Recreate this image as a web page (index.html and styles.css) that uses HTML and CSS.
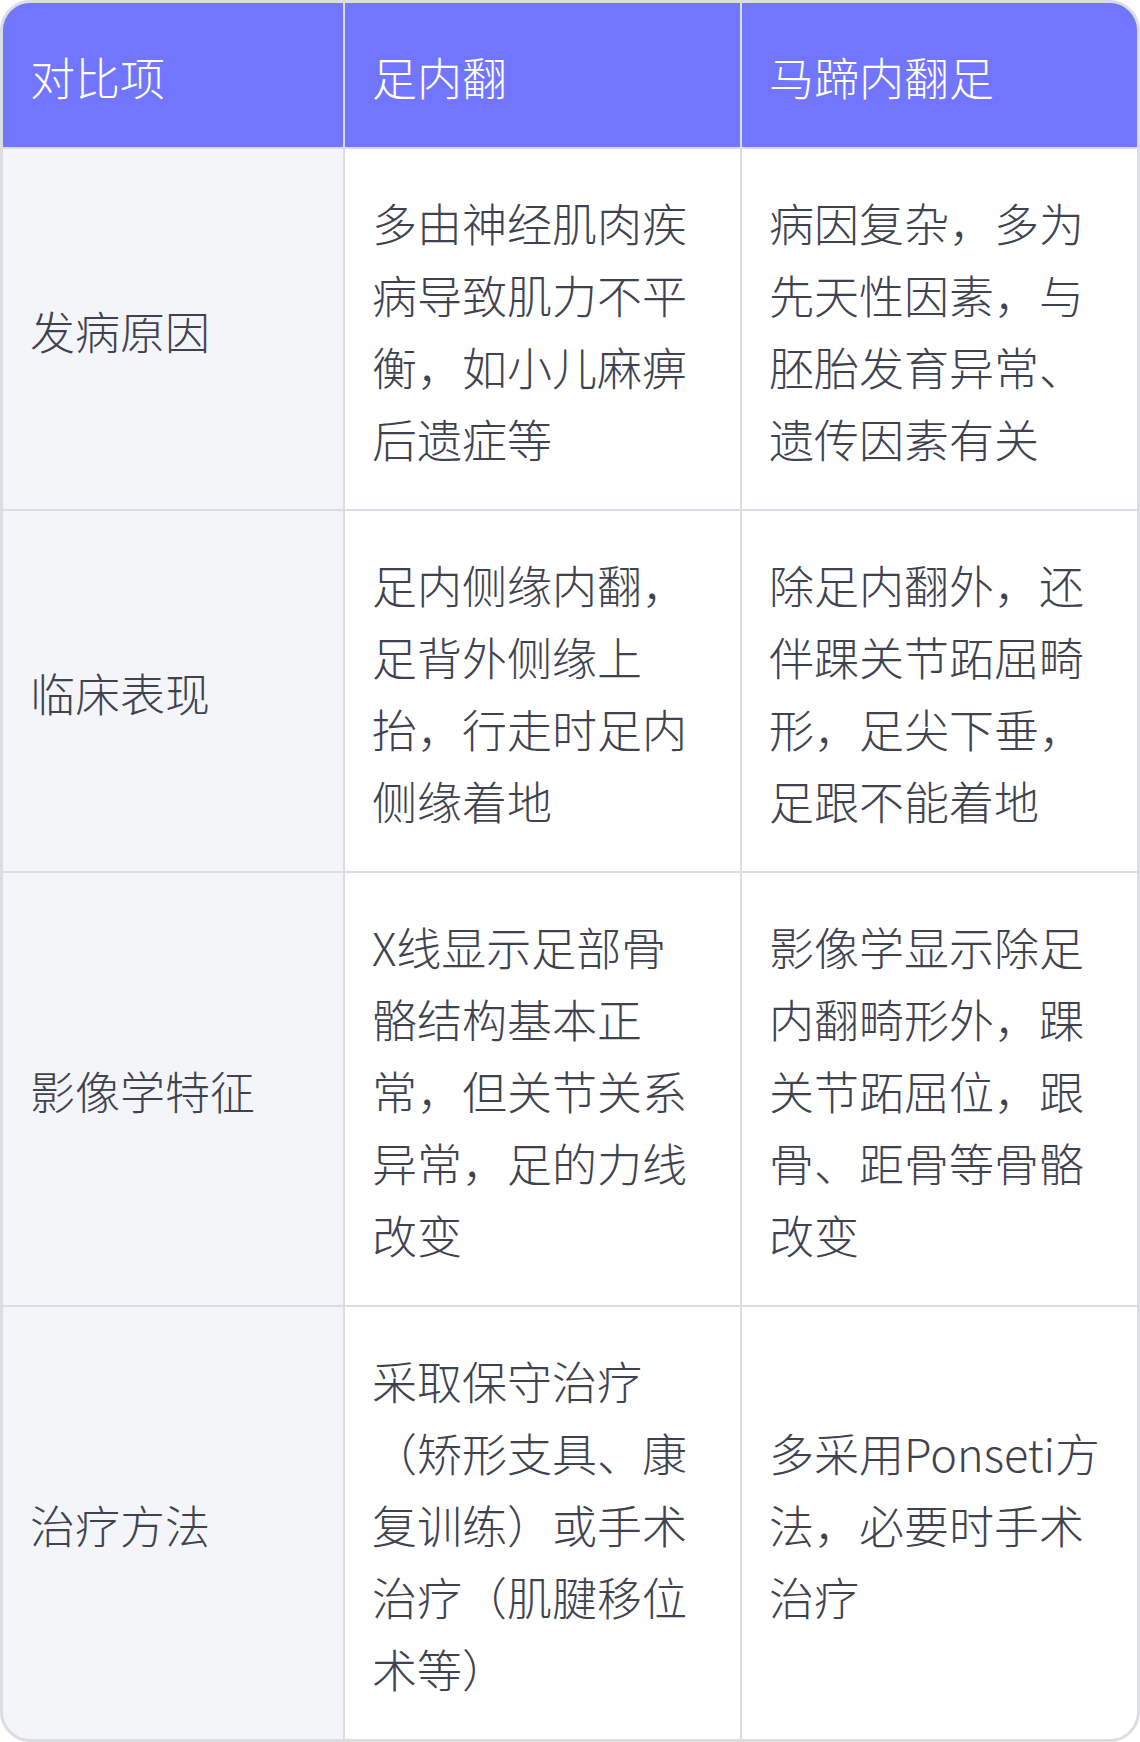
FILE: index.html
```html
<!DOCTYPE html>
<html lang="zh-CN">
<head>
<meta charset="utf-8">
<title>足内翻与马蹄内翻足对比</title>
<link rel="stylesheet" href="styles.css">
</head>
<body>
<div class="card">
  <table class="compare">
    <colgroup>
      <col class="c1">
      <col class="c2">
      <col class="c3">
    </colgroup>
    <thead>
      <tr>
        <th>对比项</th>
        <th>足内翻</th>
        <th>马蹄内翻足</th>
      </tr>
    </thead>
    <tbody>
      <tr>
        <td class="label">发病原因</td>
        <td>多由神经肌肉疾病导致肌力不平衡，如小儿麻痹后遗症等</td>
        <td>病因复杂，多为先天性因素，与胚胎发育异常、遗传因素有关</td>
      </tr>
      <tr>
        <td class="label">临床表现</td>
        <td>足内侧缘内翻，足背外侧缘上抬，行走时足内侧缘着地</td>
        <td>除足内翻外，还伴踝关节跖屈畸形，足尖下垂，足跟不能着地</td>
      </tr>
      <tr>
        <td class="label">影像学特征</td>
        <td>X线显示足部骨骼结构基本正常，但关节关系异常，足的力线改变</td>
        <td>影像学显示除足内翻畸形外，踝关节跖屈位，跟骨、距骨等骨骼改变</td>
      </tr>
      <tr>
        <td class="label">治疗方法</td>
        <td>采取保守治疗（矫形支具、康复训练）或手术治疗（肌腱移位术等）</td>
        <td>多采用Ponseti方法，必要时手术治疗</td>
      </tr>
    </tbody>
  </table>
</div>
</body>
</html>
```

FILE: styles.css
```css
html, body {
  margin: 0;
  padding: 0;
  background: #ffffff;
}

body {
  font-family: "Noto Sans CJK SC", "Noto Sans", sans-serif;
  font-weight: 300;
  color: #40434f;
}

.card {
  width: 1140px;
  box-sizing: border-box;
  border: 1px solid #dcdde2;
  border-radius: 30px;
  overflow: hidden;
  background: #dcdde2;
}

.compare {
  width: 1138px;
  table-layout: fixed;
  border-collapse: separate;
  border-spacing: 2px;
}

.c1 { width: 340px; }
.c2 { width: 395px; }
.c3 { width: 395px; }

.compare th,
.compare td {
  box-sizing: border-box;
  padding: 38px 31px 34px 27px;
  font-size: 45px;
  line-height: 72px;
  text-align: left;
  vertical-align: middle;
  font-weight: 300;
}

.compare th {
  background: #7276ff;
  color: #ffffff;
}

.compare td {
  background: #ffffff;
}

.compare td.label {
  background: #f4f5f9;
}

.compare thead th:first-child { border-top-left-radius: 27px; }
.compare thead th:last-child { border-top-right-radius: 27px; }
.compare tbody tr:last-child td:first-child { border-bottom-left-radius: 27px; }
.compare tbody tr:last-child td:last-child { border-bottom-right-radius: 27px; }
```
